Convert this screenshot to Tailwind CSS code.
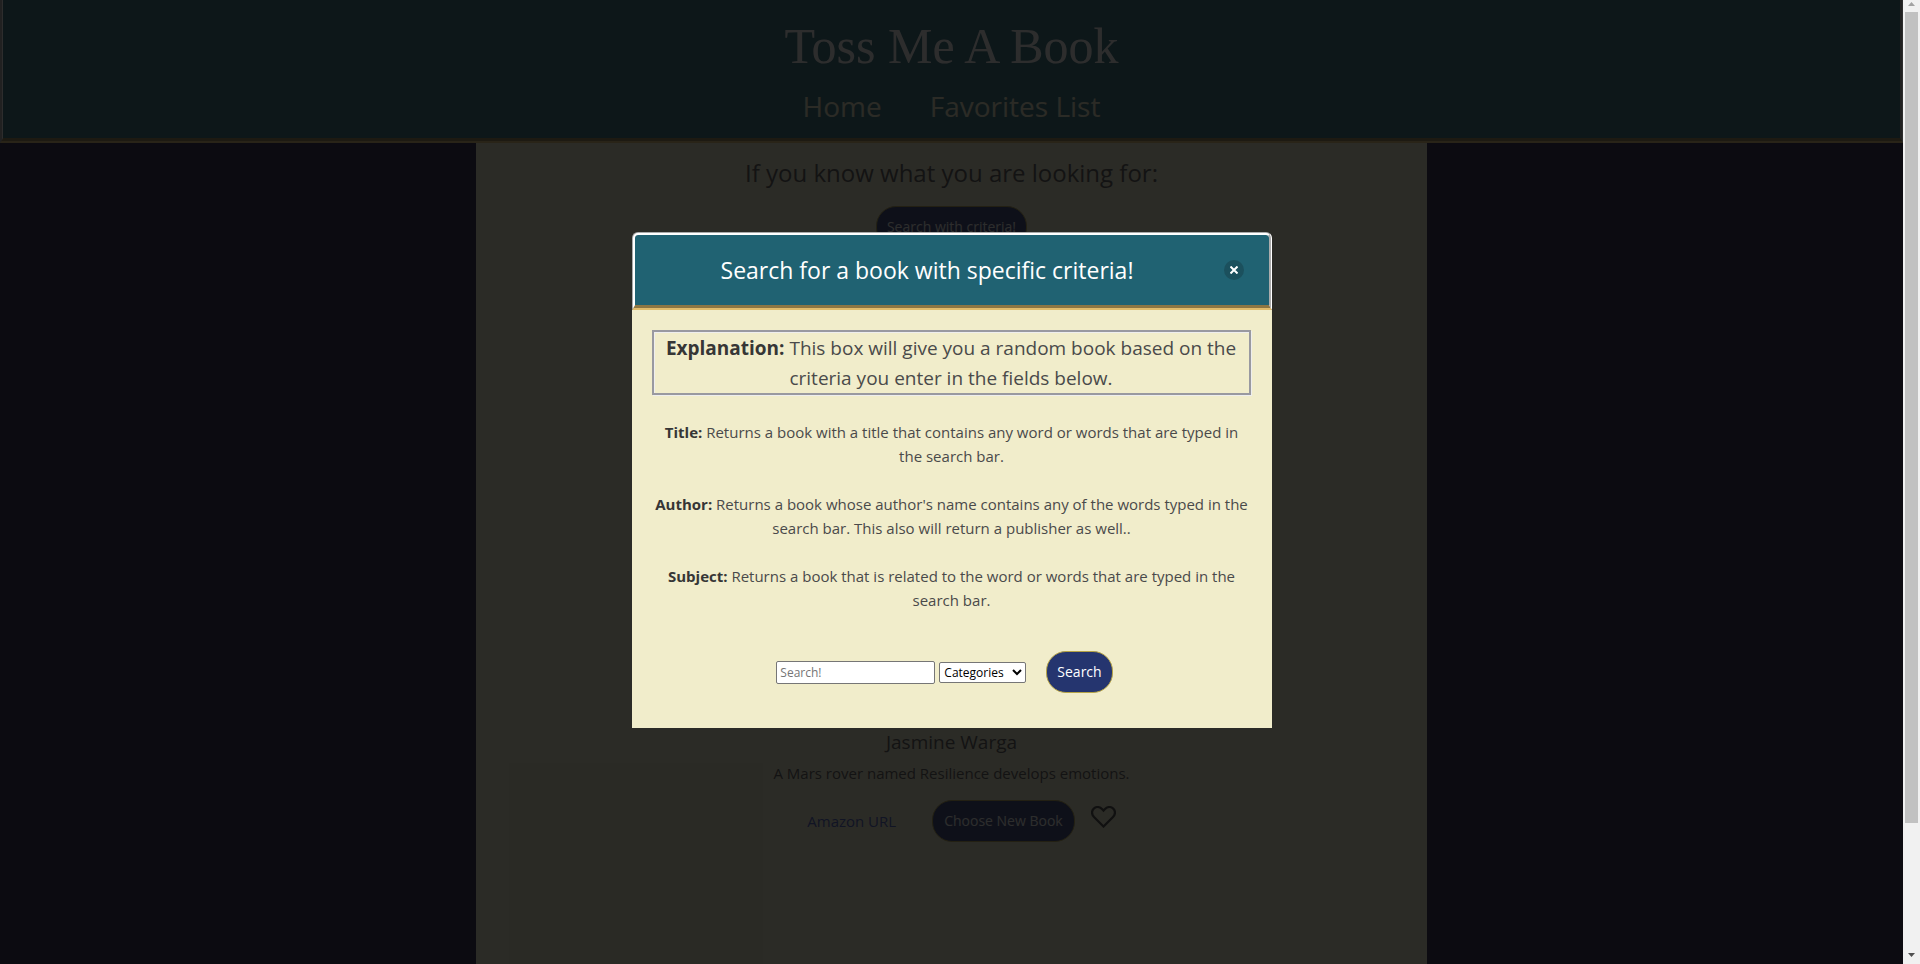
<!DOCTYPE html>
<html lang="en">
<head>
<meta charset="utf-8">
<title>Toss Me A Book</title>
<script src="https://cdn.jsdelivr.net/npm/@tailwindcss/browser@4"></script>
</head>
<body class="h-screen overflow-hidden bg-[#17103a] font-['Open_Sans',sans-serif] text-[15px] leading-6 text-[#4a4a4a]">
<div class="flex h-full">
  <div class="relative flex h-full min-w-0 flex-1 flex-col">
    <header class="flex flex-col items-center border-x-3 border-b-5 border-x-white border-b-[#e1bc6b] bg-[#206272] pt-4 pb-[9px] [border-style:groove] [border-top-style:none]">
      <h1 class="font-['Liberation_Serif',serif] text-[50px] leading-[60px] text-white">Toss Me A Book</h1>
      <nav class="mt-[7px] flex gap-12 text-[28px] leading-[46px] text-[#f1edcb]">
        <a href="#">Home</a>
        <a href="#">Favorites List</a>
      </nav>
    </header>
    <main class="mx-auto flex w-1/2 flex-1 flex-col items-center bg-[#f1edcb] pt-3 text-center">
      <h2 class="text-[24px] leading-9">If you know what you are looking for:</h2>
      <button class="mt-[15px] h-[42px] rounded-[20px] border border-[#b5a347] bg-[#25356f] px-[10px] text-sm text-white">Search with criteria!</button>
      <section class="mt-[480px] flex flex-col items-center">
        <h3 class="text-[19px] leading-7">Jasmine Warga</h3>
        <p class="mt-[5px]">A Mars rover named Resilience develops emotions.</p>
        <div class="mt-[15px] flex items-center pl-5">
          <a href="#" class="mr-9 text-[#3850c0]">Amazon URL</a>
          <button class="h-[42px] rounded-[20px] border border-[#b5a347] bg-[#25356f] px-[11px] text-sm text-white">Choose New Book</button>
          <button aria-label="Add to favorites" class="ml-4 pb-2 text-[#363636]">
            <svg width="25" height="22" viewBox="0 0 25 22" fill="none" stroke="currentColor" stroke-width="2.300"><path d="M12.500 20.500 L3 11C0.300 8.200 0.500 4.300 3 2.300C5.500 0.400 8.800 0.700 11 3L12.500 4.600L14 3C16.200 0.700 19.500 0.400 22 2.300C24.500 4.300 24.700 8.200 22 11Z"/></svg>
          </button>
        </div>
      </section>
    </main>
    <div class="absolute inset-0 flex items-center justify-center bg-[#0a0a0a]/86 pb-1">
      <div role="dialog" aria-labelledby="dialog-title" class="w-[640px]">
        <div class="flex items-center rounded-t-md border-3 border-b-5 border-white border-b-[#e1bc6b] bg-[#206272] p-5 [border-style:groove]">
          <h2 id="dialog-title" class="flex-1 pr-6 text-center text-[23px] leading-[30px] text-white">Search for a book with specific criteria!</h2>
          <button aria-label="Close" class="mr-[5px] flex size-5 items-center justify-center rounded-full bg-[#0a0a0a]/20 text-white">
            <svg width="8" height="8" viewBox="0 0 8 8" stroke="currentColor" stroke-width="2"><path d="M0.500 0.500L7.500 7.500M7.500 0.500L0.500 7.500"/></svg>
          </button>
        </div>
        <div class="bg-[#f1edcb] p-5 pb-[35px] text-center">
          <p class="mr-px mb-px border-2 border-[#9999a0] px-1 pt-px text-[19px] leading-[30px] shadow-[1px_1px_0_#eeeeee,inset_1px_1px_0_#eeeeee]"><strong class="text-[#363636]">Explanation:</strong> This box will give you a random book based on the criteria you enter in the fields below.</p>
          <p class="pt-6"><strong class="text-[#363636]">Title:</strong> Returns a book with a title that contains any word or words that are typed in the search bar.</p>
          <p class="pt-6"><strong class="text-[#363636]">Author:</strong> Returns a book whose author's name contains any of the words typed in the search bar. This also will return a publisher as well..</p>
          <p class="pt-6"><strong class="text-[#363636]">Subject:</strong> Returns a book that is related to the word or words that are typed in the search bar.</p>
          <form class="mt-[39px] flex items-center justify-center pr-[14px]">
            <input type="text" aria-label="Search" placeholder="Search!" class="h-[23px] w-[159px] rounded-[2px] border border-[#767676] bg-white px-[3px] text-xs placeholder:text-[#757575]">
            <select aria-label="Categories" class="ml-1 h-[21px] w-[87px] rounded-[2px] border border-[#767676] bg-white text-xs text-black"><option>Categories</option></select>
            <button type="button" class="ml-5 h-[42px] rounded-[20px] border border-[#b5a347] bg-[#25356f] px-[10px] text-sm text-white">Search</button>
          </form>
        </div>
      </div>
    </div>
  </div>
  <div aria-hidden="true" class="flex w-[17px] flex-col items-center bg-[#f1f1f1]">
    <svg class="h-3 w-[17px]" viewBox="0 0 17 12" fill="#a3a3a3"><path d="M5 6L8.500 2L12 6Z"/></svg>
    <div class="h-[811px] w-[13px] bg-[#c1c1c1]"></div>
    <svg class="mt-auto h-[17px] w-[17px]" viewBox="0 0 17 17" fill="#505050"><path d="M5 6L8.500 10L12 6Z"/></svg>
  </div>
</div>
</body>
</html>
